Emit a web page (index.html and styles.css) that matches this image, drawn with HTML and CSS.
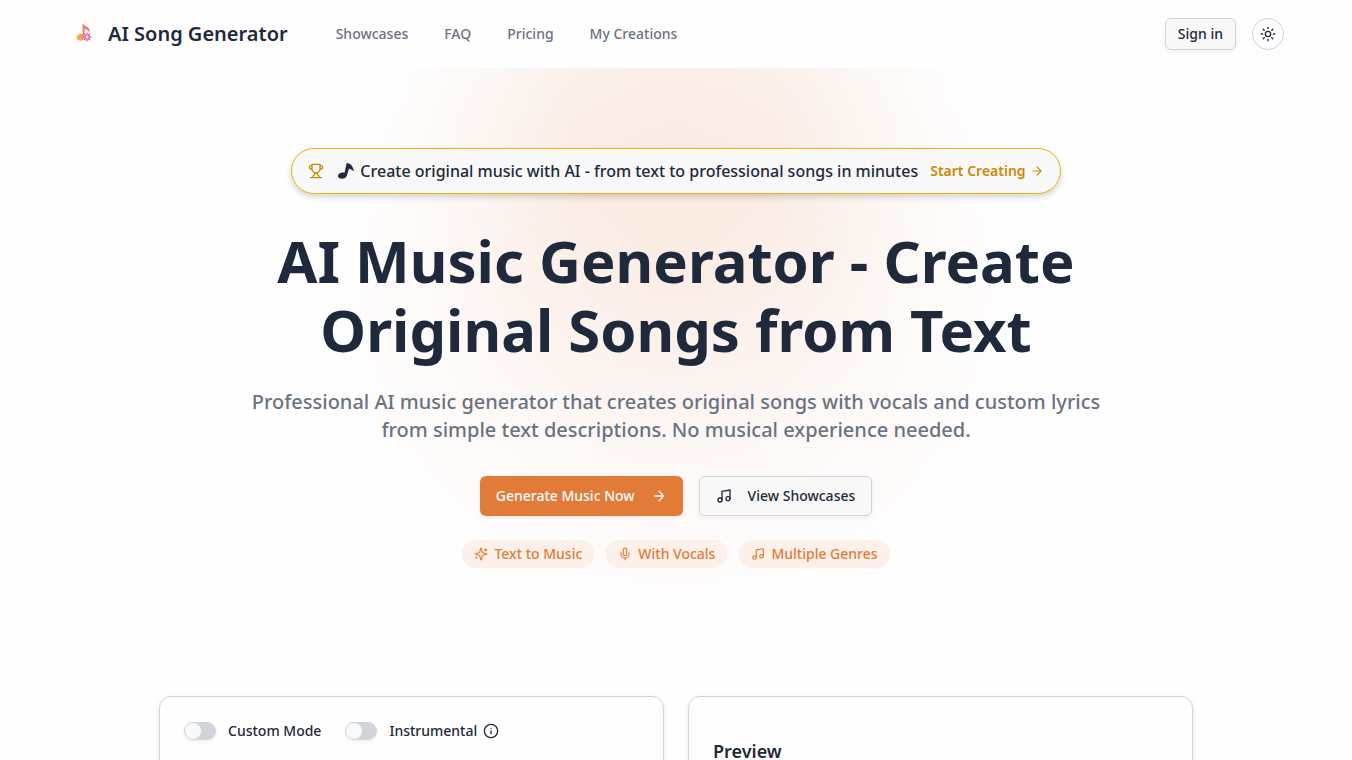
FILE: index.html
```html
<!DOCTYPE html>
<html lang="en">
<head>
<meta charset="utf-8">
<meta name="viewport" content="width=device-width, initial-scale=1">
<title>AI Song Generator</title>
<link rel="stylesheet" href="styles.css">
</head>
<body>
<svg class="sprite" aria-hidden="true">
  <symbol id="arrow" viewBox="0 0 24 24"><path d="M5 12h14M12 5l7 7-7 7"/></symbol>
  <symbol id="music" viewBox="0 0 24 24"><path d="M9 18V5l12-2v13"/><circle cx="6" cy="18" r="3"/><circle cx="18" cy="16" r="3"/></symbol>
</svg>
<header class="header">
  <div class="header-inner">
    <a class="brand" href="#">
      <svg class="logo" viewBox="0 0 32 32" aria-hidden="true">
        <defs><linearGradient id="note" gradientUnits="userSpaceOnUse" x1="9" y1="22" x2="22" y2="8"><stop offset="0" stop-color="#fbb04e"/><stop offset=".5" stop-color="#f58a62"/><stop offset="1" stop-color="#f2738a"/></linearGradient></defs>
        <path fill="url(#note)" d="M14.500 5.500c1.500 2.500 8.300 3 7.200 9.500-1-2.300-3-3.500-5-4V19c0 2.500-2 3.800-4.100 3.800S8.300 21.400 8.500 19.300c.3-2.300 3.300-4 6-3z"/>
        <circle cx="19" cy="19" r="3.200" fill="#fefefe"/>
        <path stroke="#ed4fa5" stroke-width="1.400" stroke-linecap="round" d="M19 15.200v2M19 20.800v2M15.200 19h2M20.800 19h2M16.300 16.300l1.200 1.200M20.500 20.500l1.200 1.200M21.700 16.300l-1.200 1.200M17.500 20.500l-1.200 1.200"/>
      </svg>
      <span>AI Song Generator</span>
    </a>
    <nav class="nav" aria-label="Main">
      <a href="#">Showcases</a><a href="#">FAQ</a><a href="#">Pricing</a><a href="#">My Creations</a>
    </nav>
    <div class="actions">
      <button class="btn signin" type="button">Sign in</button>
      <button class="theme" type="button" aria-label="Toggle theme">
        <svg class="icon i16" viewBox="0 0 24 24" aria-hidden="true"><circle cx="12" cy="12" r="4"/><path d="M12 2v2M12 20v2M4.9 4.9l1.4 1.4M17.7 17.7l1.4 1.4M2 12h2M20 12h2M6.3 17.7l-1.4 1.4M19.1 4.9l-1.4 1.4"/></svg>
      </button>
    </div>
  </div>
</header>
<main>
  <section class="hero">
    <a class="promo" href="#">
      <svg class="icon i16" viewBox="0 0 24 24" aria-hidden="true"><path d="M6 9H4.500a2.500 2.500 0 0 1 0-5H6M18 9h1.500a2.500 2.500 0 0 0 0-5H18M4 22h16M10 14.660V17c0 .55-.47.98-.97 1.210C7.850 18.750 7 20.240 7 22M14 14.660V17c0 .55.47.98.97 1.210C16.150 18.750 17 20.240 17 22M18 2H6v7a6 6 0 0 0 12 0V2Z"/></svg>
      <span class="promo-text"><svg class="note" viewBox="0 0 20 20" aria-hidden="true"><path d="M10.700 2c4 .4 6.700 3.500 7.100 8.700-1.300-1.900-2.800-2.700-4.800-3l-2.200 7.100c-.7 2-2.500 3-4.800 3-2.500 0-4.200-1.300-4-3.100.2-2 2.200-3.300 4.500-3.300.8 0 1.400.1 2 .4z"/></svg>Create original music with AI - from text to professional songs in minutes</span>
      <span class="promo-cta">Start Creating <svg class="icon i14" aria-hidden="true"><use href="#arrow"/></svg></span>
    </a>
    <h1>AI Music Generator - Create Original Songs from Text</h1>
    <p class="lead">Professional AI music generator that creates original songs with vocals and custom lyrics from simple text descriptions. No musical experience needed.</p>
    <div class="cta-row">
      <button class="btn primary" type="button">Generate Music Now <svg class="icon i16" aria-hidden="true"><use href="#arrow"/></svg></button>
      <button class="btn outline" type="button"><svg class="icon i16" aria-hidden="true"><use href="#music"/></svg> View Showcases</button>
    </div>
    <ul class="tags">
      <li><svg class="icon i14" viewBox="0 0 24 24" aria-hidden="true"><path d="M9.937 15.500A2 2 0 0 0 8.500 14.063l-6.135-1.582a.5.5 0 0 1 0-.962L8.500 9.936A2 2 0 0 0 9.937 8.500l1.582-6.135a.5.5 0 0 1 .963 0L14.063 8.500A2 2 0 0 0 15.500 9.937l6.135 1.581a.5.5 0 0 1 0 .964L15.500 14.063a2 2 0 0 0-1.437 1.437l-1.582 6.135a.5.5 0 0 1-.963 0zM20 3v4M22 5h-4M4 17v2M5 18H3"/></svg>Text to Music</li>
      <li><svg class="icon i14" viewBox="0 0 24 24" aria-hidden="true"><path d="M12 2a3 3 0 0 0-3 3v7a3 3 0 0 0 6 0V5a3 3 0 0 0-3-3ZM19 10v2a7 7 0 0 1-14 0v-2M12 19v3"/></svg>With Vocals</li>
      <li><svg class="icon i14" aria-hidden="true"><use href="#music"/></svg>Multiple Genres</li>
    </ul>
  </section>
  <section class="studio">
    <div class="card switches">
      <label class="switch"><input type="checkbox" role="switch">Custom Mode</label>
      <div class="switch-group">
        <label class="switch"><input type="checkbox" role="switch">Instrumental</label>
        <svg class="icon i16" viewBox="0 0 24 24" aria-hidden="true"><circle cx="12" cy="12" r="10"/><path d="M12 16v-4M12 8h.01"/></svg>
      </div>
    </div>
    <div class="card preview"><h2>Preview</h2></div>
  </section>
</main>
</body>
</html>
```
FILE: styles.css
```css
* { box-sizing: border-box; }
html { overflow-x: hidden; scrollbar-width: none; }
body {
  margin: 0;
  background: #fefefe;
  color: #1e293b;
  font: 500 14px/20px "Noto Sans", sans-serif;
}
a { color: inherit; text-decoration: none; }
button { font: inherit; color: inherit; cursor: pointer; }
.sprite { display: none; }
.icon { fill: none; stroke: currentColor; stroke-width: 2; stroke-linecap: round; stroke-linejoin: round; flex: none; }
.i16 { width: 16px; height: 16px; }
.i14 { width: 14px; height: 14px; }

.header { background: #fefefe; padding: 16px 32px; }
.header-inner { display: flex; align-items: center; max-width: 1216px; margin: 0 auto; height: 36px; }
.brand { display: flex; align-items: center; gap: 8px; font-size: 20px; line-height: 28px; font-weight: 600; }
.logo { width: 32px; height: 32px; fill: none; }
.nav { display: flex; gap: 36px; margin-left: 48px; color: #6b7280; }
.actions { display: flex; align-items: center; gap: 16px; margin-left: auto; }
.btn {
  display: inline-flex; align-items: center; justify-content: center; gap: 16px;
  border: 1px solid #d1d5db; border-radius: 6px; background: #f8f8f8;
  box-shadow: 0 2px 5px rgb(0 0 0 / 6%);
}
.signin { height: 32px; padding: 0 12px; }
.theme { display: grid; place-items: center; width: 32px; height: 32px; padding: 0; border: 1px solid #d1d5db; border-radius: 50%; background: #fefefe; }

.hero {
  display: flex; flex-direction: column; align-items: center;
  padding: 80px 32px 128px; text-align: center;
  background:
    radial-gradient(300px 300px at 50% 70px, rgb(226 123 56 / 9%) 0%, rgb(226 123 56 / 8%) 35%, rgb(226 123 56 / 4%) 62%, rgb(226 123 56 / 1%) 85%, transparent 100%),
    radial-gradient(370px 350px at 50% 220px, rgb(232 120 70 / 7%) 0%, rgb(232 120 70 / 6%) 40%, rgb(232 120 70 / 3%) 65%, rgb(232 120 70 / 1%) 85%, transparent 100%);
}
.promo {
  display: flex; align-items: center; gap: 12px; padding: 10px 16px;
  border: 1px solid #eab308; border-radius: 24px; background: #f8f8f8;
  box-shadow: 0 3px 6px rgb(0 0 0 / 16%);
}
.promo > .icon, .promo-cta { color: #ca8a04; }
.promo-text { display: flex; align-items: center; gap: 4px; font-size: 16px; line-height: 24px; }
.note { width: 20px; height: 20px; fill: currentColor; }
.promo-cta { display: flex; align-items: center; gap: 4px; font-weight: 600; }
h1 { max-width: 896px; margin: 32px 0 0; font-size: 58px; line-height: 69px; font-weight: 700; }
.lead { max-width: 896px; margin: 24px 0 0; color: #6b7280; font-size: 20px; line-height: 28px; }
.cta-row { display: flex; gap: 16px; margin-top: 32px; }
.cta-row .btn { height: 40px; padding: 0 16px; }
.cta-row .primary { border: 0; background: #e27b38; color: #fff; }
.tags { display: flex; gap: 12px; margin: 24px 0 0; padding: 0; list-style: none; }
.tags li { display: flex; align-items: center; gap: 6px; padding: 4px 12px; border-radius: 14px; background: #fcf0e9; color: #e27b38; }

.studio { display: grid; grid-template-columns: 1fr 1fr; gap: 24px; max-width: 1034px; margin: 0 auto; }
.card { height: 480px; padding: 24px; border: 1px solid #d4d5d8; border-radius: 12px; background: #fefefe; box-shadow: 0 2px 5px rgb(0 0 0 / 10%); }
.switches { display: flex; align-items: flex-start; gap: 24px; }
.switch-group { display: flex; align-items: center; gap: 6px; }
.switch { display: flex; align-items: center; gap: 12px; }
.switch input {
  appearance: none; display: flex; align-items: center; width: 32px; height: 18px; margin: 0;
  border: 1px solid #d1d5db; border-radius: 9px; background: #d1d5db; box-shadow: 0 2px 4px rgb(0 0 0 / 6%);
}
.switch input::before { content: ""; width: 16px; height: 16px; border-radius: 50%; background: #f8f9fa; }
.switch input:checked { background: #e27b38; border-color: #e27b38; justify-content: flex-end; }
.preview h2 { margin: 16px 0 0; font-size: 18px; line-height: 28px; font-weight: 600; }
```
